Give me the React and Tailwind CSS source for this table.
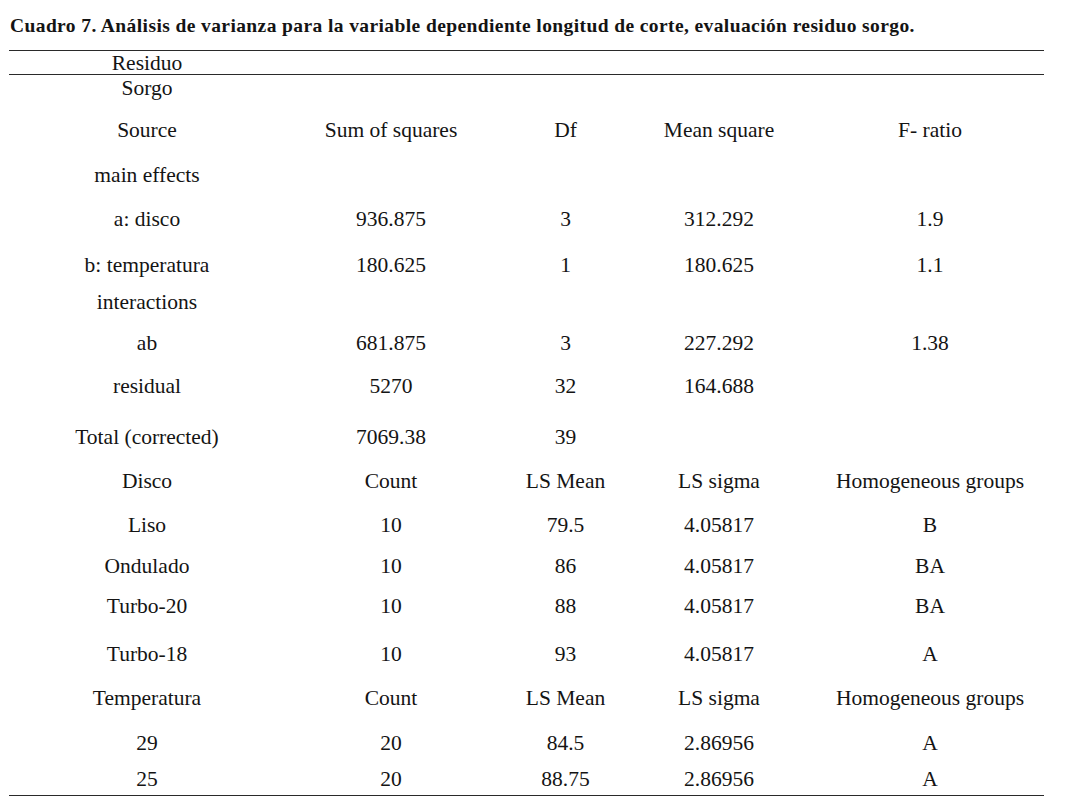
import React from "react";

const rows = [
  ["h-[42px]", ["Source", "Sum of squares", "Df", "Mean square", "F- ratio"]],
  ["h-[45px]", ["main effects", "", "", "", ""]],
  ["h-[44px]", ["a: disco", "936.875", "3", "312.292", "1.9"]],
  ["h-[46px]", ["b: temperatura", "180.625", "1", "180.625", "1.1"]],
  ["h-[37px]", ["interactions", "", "", "", ""]],
  ["h-[41px]", ["ab", "681.875", "3", "227.292", "1.38"]],
  ["h-[43px]", ["residual", "5270", "32", "164.688", ""]],
  ["h-[51px]", ["Total (corrected)", "7069.38", "39", "", ""]],
  ["h-[44px]", ["Disco", "Count", "LS Mean", "LS sigma", "Homogeneous groups"]],
  ["h-[44px]", ["Liso", "10", "79.5", "4.05817", "B"]],
  ["h-[41px]", ["Ondulado", "10", "86", "4.05817", "BA"]],
  ["h-[40px]", ["Turbo-20", "10", "88", "4.05817", "BA"]],
  ["h-[48px]", ["Turbo-18", "10", "93", "4.05817", "A"]],
  ["h-[44px]", ["Temperatura", "Count", "LS Mean", "LS sigma", "Homogeneous groups"]],
  ["h-[45px]", ["29", "20", "84.5", "2.86956", "A"]],
  ["h-[36px]", ["25", "20", "88.75", "2.86956", "A"]],
];

function Row({ h, cells }) {
  return (
    <div className={`grid grid-cols-[276px_212px_137px_170px_252px] items-end ${h}`}>
      {cells.map((c, i) => (
        <div key={i} className="text-center leading-none whitespace-nowrap">
          {c}
        </div>
      ))}
    </div>
  );
}

export default function App() {
  return (
    <div className="w-[1077px] h-[807px] bg-white text-[#141414] overflow-hidden font-['Liberation_Serif','DejaVu_Serif',serif]">
      <div className="h-[50px] pl-[10px] pt-[16px]">
        <div className="text-[19.5px] font-bold leading-none tracking-[0.4px] whitespace-nowrap">
          Cuadro 7. Análisis de varianza para la variable dependiente longitud de corte, evaluación residuo sorgo.
        </div>
      </div>
      <div className="ml-[9px] w-[1035px] text-[21.5px]">
        <div className="border-t border-[#2a2a2a]" />
        <div className="grid grid-cols-[276px_212px_137px_170px_252px] items-end h-[23px]">
          <div className="text-center leading-none">Residuo</div>
        </div>
        <div className="border-t border-[#2a2a2a]" />
        <div className="grid grid-cols-[276px_212px_137px_170px_252px] items-end h-[24px]">
          <div className="text-center leading-none">Sorgo</div>
        </div>
        {rows.map(([h, cells], i) => (
          <Row key={i} h={h} cells={cells} />
        ))}
        <div className="h-[5px]" />
        <div className="border-t border-[#2a2a2a]" />
      </div>
    </div>
  );
}
